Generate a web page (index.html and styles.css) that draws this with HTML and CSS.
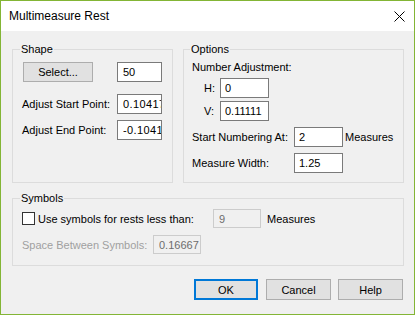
FILE: index.html
```html
<!DOCTYPE html>
<html lang="en">
<head>
  <meta charset="UTF-8">
  <title>Multimeasure Rest</title>
  <link rel="stylesheet" href="styles.css">
</head>
<body>
<div class="window">
  <div class="titlebar">
    <span class="title">Multimeasure Rest</span>
    <svg class="close" width="11" height="11" viewBox="0 0 11 11">
      <path d="M0.5 0.5L10.5 10.5M10.5 0.5L0.5 10.5" stroke="#000" stroke-width="1"></path>
    </svg>
  </div>

  <div class="content">
    <div class="top-row">
      <fieldset class="group shape">
        <legend>Shape</legend>
        <div class="row first">
          <button class="btn select">Select...</button>
          <input class="field" value="50">
        </div>
        <div class="row gap-l">
          <label class="lbl">Adjust Start Point:</label>
          <input class="field num-text" value="0.10417">
        </div>
        <div class="row gap-s">
          <label class="lbl">Adjust End Point:</label>
          <input class="field num-text" value="-0.10417">
        </div>
      </fieldset>

      <fieldset class="group options">
        <legend>Options</legend>
        <div class="heading">Number Adjustment:</div>
        <div class="row sub">
          <label class="lbl axis">H:</label>
          <input class="field wide" value="0">
        </div>
        <div class="row sub gap-s">
          <label class="lbl axis">V:</label>
          <input class="field wide" value="0.11111">
        </div>
        <div class="row gap-s">
          <label class="lbl num">Start Numbering At:</label>
          <input class="field wide" value="2">
          <span class="unit">Measures</span>
        </div>
        <div class="row gap-s">
          <label class="lbl num">Measure Width:</label>
          <input class="field wide" value="1.25">
        </div>
      </fieldset>
    </div>

    <fieldset class="group symbols">
      <legend>Symbols</legend>
      <div class="row short">
        <label class="check-lbl"><span class="check"></span>Use symbols for rests less than:</label>
        <input class="field wide" value="9" disabled>
        <span class="unit far">Measures</span>
      </div>
      <div class="row short gap-m">
        <label class="lbl dim">Space Between Symbols:</label>
        <input class="field wide" value="0.16667" disabled>
      </div>
    </fieldset>

    <div class="actions">
      <button class="btn ok">OK</button>
      <button class="btn cancel">Cancel</button>
      <button class="btn help">Help</button>
    </div>
  </div>
</div>
</body>
</html>
```

FILE: styles.css
```css
body {
  margin: 0;
  font-family: "Liberation Sans", Arial, sans-serif;
  font-size: 11px;
  color: #000;
}

.window {
  width: 415px;
  height: 315px;
  box-sizing: border-box;
  border: 1px solid #83b535;
  background: #f0f0f0;
  display: flex;
  flex-direction: column;
}

.titlebar {
  height: 30px;
  flex: none;
  background: #fff;
  display: flex;
  align-items: center;
  justify-content: space-between;
  padding: 0 9px 0 8px;
}

.title {
  font-size: 12px;
}

.close {
  display: block;
  margin-top: 1px;
}

.content {
  padding: 10px 10px 0 11px;
}

.top-row {
  display: flex;
  gap: 10px;
}

/* group boxes */
.group {
  margin: 0;
  min-width: 0;
  border: 1px solid #dcdcdc;
  padding: 0 0 0 9px;
}

.group legend {
  line-height: 16px;
  padding: 0 1px;
  margin-left: -2px;
}

.shape {
  width: 161px;
  box-sizing: border-box;
  padding-top: 5px;
}

.options {
  width: 221px;
  box-sizing: border-box;
  padding: 2px 0 9px 8px;
}

.symbols {
  margin-top: 7px;
  padding-top: 3px;
  padding-bottom: 11px;
}

.row {
  display: flex;
  align-items: center;
  height: 20px;
}

.row.short {
  height: 19px;
}

.gap-l { margin-top: 12px; }
.gap-m { margin-top: 7px; }
.gap-s { margin-top: 6px; }

.heading {
  line-height: 16px;
}

.sub {
  margin-top: 3px;
}

.lbl {
  white-space: nowrap;
}

.shape .lbl {
  width: 95px;
  flex: none;
}

.shape .first {
  padding-left: 1px;
}

.axis {
  width: 16px;
  padding-left: 12px;
  flex: none;
}

.num {
  width: 102px;
  flex: none;
}

.dim {
  color: #a0a0a0;
  width: 131px;
  flex: none;
}

.unit {
  margin-left: 2px;
}

.unit.far {
  margin-left: 6px;
}

/* inputs */
.field {
  box-sizing: border-box;
  width: 45px;
  height: 20px;
  margin: 0;
  border: 1px solid #7a7a7a;
  background: #fff;
  padding: 0 0 0 4px;
  font: inherit;
  color: #000;
  outline: none;
}

.field.wide {
  width: 49px;
}

.short .field {
  width: 48px;
  height: 19px;
}

.field:disabled {
  border-color: #cccccc;
  background: #f0f0f0;
  color: #6d6d6d;
  padding-left: 5px;
}

.shape .field {
  padding-left: 5px;
}

.num-text {
  letter-spacing: 0.4px;
}

.check-lbl {
  width: 191px;
  flex: none;
  display: flex;
  align-items: center;
  white-space: nowrap;
}

.check {
  width: 13px;
  height: 13px;
  box-sizing: border-box;
  border: 1px solid #333;
  background: #fff;
  margin-right: 3px;
  flex: none;
}

/* buttons */
.btn {
  box-sizing: border-box;
  height: 20px;
  margin: 0;
  padding: 0;
  border: 1px solid #adadad;
  background: #e1e1e1;
  font: inherit;
  color: #000;
}

.select {
  width: 70px;
  margin-right: 24px;
}

.actions {
  display: flex;
  justify-content: flex-end;
  margin-top: 13px;
  padding-right: 1px;
}

.actions .btn {
  height: 21px;
  width: 65px;
}

.actions .ok {
  width: 64px;
  border: 2px solid #0078d7;
}

.actions .cancel {
  margin-left: 8px;
}

.actions .help {
  margin-left: 7px;
}
```
